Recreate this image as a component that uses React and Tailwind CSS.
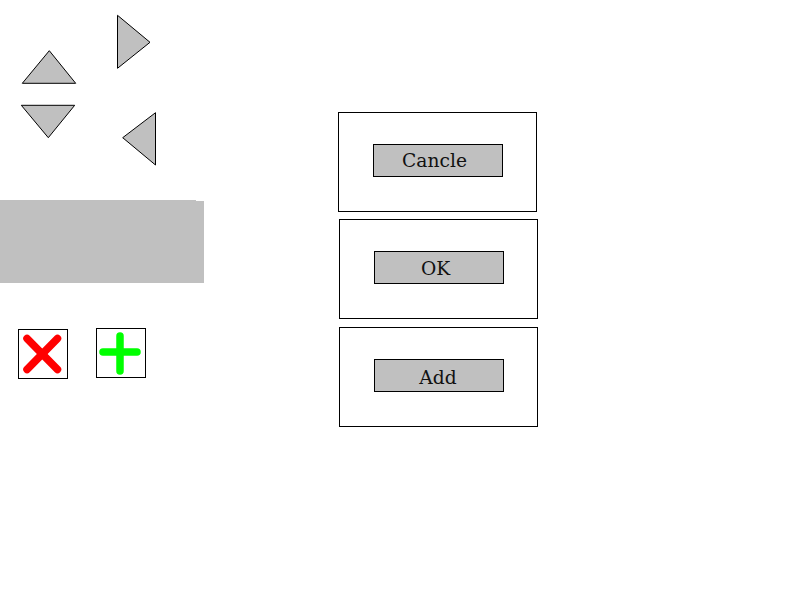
import React from "react";

function DialogBox({ label, className = "", textClass = "" }) {
  return (
    <div className={`w-[199px] h-[100px] border border-black bg-white flex items-start pt-[31px] pl-[34px] ${className}`}>
      <div
        className={`w-[130px] h-[33px] border border-black bg-[#c0c0c0] flex items-center justify-center text-[18.67px] leading-none text-[#111] ${textClass}`}
        style={{ fontFamily: '"DejaVu Serif", serif' }}
      >
        <span>{label}</span>
      </div>
    </div>
  );
}

export default function App() {
  return (
    <div className="w-[800px] h-[602px] bg-white overflow-hidden flex items-start">
      {/* left column */}
      <div className="w-[204px] flex flex-col">
        {/* arrow triangles */}
        <svg width="200" height="200" viewBox="0 0 200 200" className="block">
          <polygon points="49.3,50.7 22.3,83.3 75.7,83.3" fill="#c0c0c0" stroke="#000" strokeWidth="1" />
          <polygon points="21.3,105.3 74.7,105.3 48.3,137.7" fill="#c0c0c0" stroke="#000" strokeWidth="1" />
          <polygon points="117.5,15.3 150,42.3 117.5,68.3" fill="#c0c0c0" stroke="#000" strokeWidth="1" />
          <polygon points="155.5,112.7 155.5,165 122.7,137.7" fill="#c0c0c0" stroke="#000" strokeWidth="1" />
        </svg>

        {/* gray panel */}
        <div className="flex items-start h-[83px]">
          <div className="w-[196px] h-[83px] bg-[#c0c0c0]" />
          <div className="w-[8px] h-[82px] mt-[1px] bg-[#c0c0c0]" />
        </div>

        {/* icon buttons */}
        <div className="flex items-start gap-[28px] mt-[45px] pl-[18px]">
          <div className="w-[50px] h-[50px] mt-[1px] border border-black bg-white">
            <svg width="48" height="48" viewBox="0 0 48 48" className="block">
              <line x1="8" y1="8.5" x2="38.5" y2="39.5" stroke="#ff0000" strokeWidth="7.5" strokeLinecap="round" />
              <line x1="38.5" y1="8.5" x2="8" y2="39.5" stroke="#ff0000" strokeWidth="7.5" strokeLinecap="round" />
            </svg>
          </div>
          <div className="w-[50px] h-[50px] border border-black bg-white">
            <svg width="48" height="48" viewBox="0 0 48 48" className="block">
              <line x1="23" y1="7" x2="23" y2="42" stroke="#00ff00" strokeWidth="7.5" strokeLinecap="round" />
              <line x1="6" y1="23" x2="40" y2="23" stroke="#00ff00" strokeWidth="7.5" strokeLinecap="round" />
            </svg>
          </div>
        </div>
      </div>

      {/* dialog column */}
      <div className="flex flex-col ml-[135px] mt-[112px]">
        <DialogBox label="Cancle" className="-ml-[1px]" textClass="pr-[7px] pt-[1px]" />
        <DialogBox label="OK" className="mt-[7px]" textClass="pr-[7px] pt-[4px]" />
        <DialogBox label="Add" className="mt-[8px]" textClass="pr-[2px] pt-[5px]" />
      </div>
    </div>
  );
}
